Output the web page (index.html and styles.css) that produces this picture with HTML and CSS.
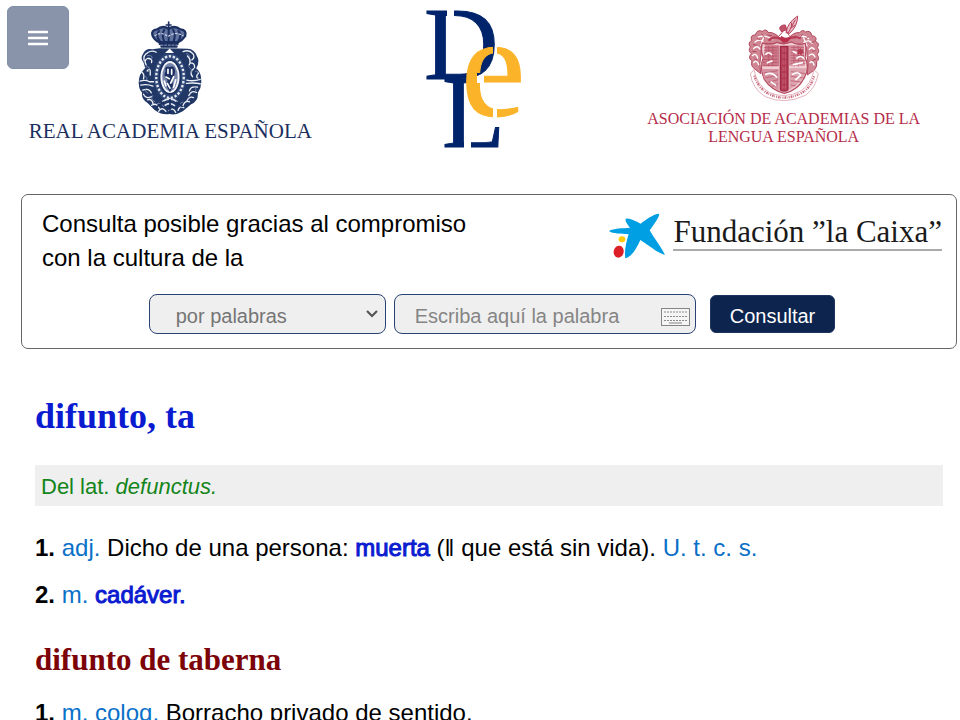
FILE: index.html
```
<!DOCTYPE html>
<html lang="es">
<head>
<meta charset="utf-8">
<meta name="viewport" content="width=device-width, initial-scale=1">
<title>difunto, difunta | Diccionario de la lengua española</title>
<link rel="stylesheet" href="styles.css">
</head>
<body>
<button class="menu-button" type="button" aria-label="Menú">
  <svg width="20" height="16" viewBox="0 0 20 16" aria-hidden="true"><path d="M1 2H19M1 8H19M1 14H19" stroke="#fff" stroke-width="2.600" stroke-linecap="round"/></svg>
</button>

<header class="site-header">
  <a class="brand brand-rae" href="#">
    <svg class="crest-rae" viewBox="54 35 190 280" aria-hidden="true">
      <!-- crown -->
      <g fill="none" stroke="#1b2f60" stroke-linecap="round">
        <path d="M145 38V60M138 47H152" stroke-width="5"/>
        <path d="M97 78Q92 62 111 60Q127 47 145 58Q163 47 180 60Q200 62 194 80Q184 94 173 98H117Q103 92 97 78Z" fill="#6373a0" stroke-width="7"/>
        <path d="M119 96Q105 78 116 65M132 97Q123 75 132 61M145 97V57M159 97Q168 76 158 61M173 96Q186 78 174 65" stroke-width="6"/>
        <path d="M104 79Q123 65 143 81Q165 65 188 79" stroke="#dce1ed" stroke-width="3" stroke-dasharray="5 6"/>
        <path d="M119 103H171M124 111H168" stroke-width="8"/>
        <path d="M122 107H170" stroke="#cbd2e3" stroke-width="2" stroke-dasharray="6 5"/>
      </g>
      <!-- mantling around the oval -->
      <path d="M118 116L96 119Q78 115 70 130Q59 146 70 158L75 175Q54 195 56 222Q57 241 66 248Q62 267 83 280L103 300Q122 315 147 312Q166 317 187 304L212 283Q234 273 232 249Q244 231 242 211Q242 187 227 176Q239 155 229 139Q221 119 202 118L173 117Z" fill="#213867"/>
      <g fill="none" stroke="#eef1f7" stroke-width="4" stroke-linecap="round">
        <path d="M72 153Q68 137 83 129Q95 121 108 128M78 166Q70 152 83 146Q98 148 94 159M81 184Q92 170 90 196M65 187Q74 194 70 207M60 214Q75 209 88 216H100M62 226Q81 222 98 229M68 241Q87 234 93 249M70 253Q78 269 94 260M82 270Q96 265 99 284M94 286Q111 277 117 296M115 304Q125 289 137 304"/>
        <path d="M188 126Q206 119 217 132Q225 143 214 151M201 139Q214 151 206 166M208 160Q224 159 222 174M219 177Q206 187 216 201M234 190Q224 202 232 205M199 211Q218 216 239 209M198 221Q219 218 239 222M231 232Q211 228 207 243M228 248Q213 240 205 257M219 263Q206 258 199 274M207 276Q194 270 187 288M190 293Q177 287 173 301M166 307Q157 291 146 302"/>
      </g>
      <g fill="none" stroke="#8290b3" stroke-width="2.500">
        <path d="M81 138Q100 135 94 150M76 173Q93 166 84 187M72 199Q84 202 79 211M79 235Q71 244 84 250M98 256Q88 267 105 276M110 282Q123 275 130 291M197 132Q207 132 207 145M204 171Q219 181 210 193M224 186Q235 180 230 195M221 228Q232 242 220 250M208 261Q196 267 207 271M188 276Q174 279 181 294"/>
      </g>
      <path d="M134 130L148 117L161 130Z" fill="#fff"/>
      <!-- oval medallion -->
      <ellipse cx="149" cy="202" rx="48" ry="70" fill="#324a79"/>
      <ellipse cx="149" cy="202" rx="41" ry="62" fill="none" stroke="#e3e8f1" stroke-width="7" stroke-dasharray="7 5"/>
      <ellipse cx="149" cy="202" rx="31" ry="50" fill="#f3f5fa" stroke="#1b2f60" stroke-width="5"/>
      <ellipse cx="149" cy="202" rx="23" ry="42" fill="#7785aa"/>
      <path d="M136 184Q131 168 147 172Q165 166 164 188Q163 202 154 210L158 226L149 248L137 225L142 211Q127 201 136 184Z" fill="#1b2f60"/>
      <path d="M143 179V191M154 180V193M137 202L147 207M160 201L151 220M141 221L149 235M132 214L137 228M166 210L160 232" fill="none" stroke="#fff" stroke-width="5" stroke-linecap="round"/>
      <path d="M126 275Q149 258 171 276M133 287Q149 275 164 288" fill="none" stroke="#dfe4ef" stroke-width="5"/>
      <path d="M149 267V310M108 292L132 276M187 291L167 276" stroke="#1b2f60" stroke-width="5"/>
    </svg>
    <span class="name-rae">REAL ACADEMIA ESPAÑOLA</span>
  </a>

  <a class="brand" href="#" aria-label="Diccionario de la lengua española">
    <svg class="monogram" viewBox="0 0 100 150" aria-hidden="true">
      <defs>
        <mask id="cut-d"><rect width="100" height="150" fill="#fff"/><rect x="23" y="6" width="7" height="13" fill="#000"/></mask>
        <mask id="cut-e"><rect width="100" height="150" fill="#fff"/><path d="M69 44h4v14h-4zM69 108h4v14h-4zM53 73h7v10h-7z" fill="#000"/></mask>
        <mask id="cut-l"><rect width="100" height="150" fill="#fff"/><rect x="40" y="138" width="7" height="12" fill="#000"/></mask>
      </defs>
      <g mask="url(#cut-d)"><text class="mono-blue" x="0" y="79">D</text></g>
      <g mask="url(#cut-l)"><text class="mono-blue" x="18" y="147">L</text></g>
      <g mask="url(#cut-e)"><text class="mono-gold" x="37" y="116">e</text></g>
    </svg>
  </a>

  <a class="brand brand-asale" href="#">
    <svg class="crest-asale" viewBox="36 14 222 264" aria-hidden="true">
      <!-- leaves -->
      <g fill="#cf8592" stroke="#b34a60" stroke-width="3">
        <path d="M147 98Q124 64 99 66Q95 54 82 63Q66 56 61 74Q44 73 50 91Q37 96 46 110Q38 120 49 130Q37 144 51 151Q46 167 58 175L77 190Q72 158 78 131Q76 105 101 100Z"/>
        <path d="M147 98Q175 62 194 67Q203 55 211 65Q228 58 230 76Q249 78 241 93Q256 99 247 112Q256 123 246 132Q256 146 245 154Q248 168 238 179L217 194Q222 157 216 132Q219 111 197 102Z"/>
      </g>
      <g fill="none" stroke="#fff" stroke-width="4" stroke-linecap="round">
        <path d="M70 80Q90 72 113 88M60 95Q75 83 85 96M56 115Q66 103 75 116M52 136Q64 126 68 143M56 157Q65 146 71 163M85 83L78 105M185 84Q205 71 221 85M207 96Q223 86 231 99M223 117Q233 106 239 120M223 135Q234 126 240 140M225 157Q233 149 237 164M206 83L216 107"/>
      </g>
      <g fill="none" stroke="#a83d53" stroke-width="2.500">
        <path d="M80 70L89 82M67 84L77 89M54 103L66 105M52 123L64 124M58 145L67 150M203 71L194 83M219 79L211 87M239 92L229 98M243 119L231 123M244 145L232 151M97 74L111 76M182 76L173 83"/>
      </g>
      <!-- branch and figure above the shield -->
      <path d="M101 91Q117 72 147 91Q167 76 198 83" fill="none" stroke="#b9405a" stroke-width="7"/>
      <path d="M133 86L139 77Q154 87 172 80L158 95Q144 100 133 86Z" fill="#b9304d"/>
      <path d="M153 67Q157 37 188 17Q188 47 164 69Z" fill="#e9bdc6" stroke="#b9405a" stroke-width="3"/>
      <path d="M134 55Q135 43 151 44L155 57L140 65ZM142 66L131 78M152 59L163 76M160 67L181 28M169 49L170 37M166 54L181 44" fill="#bf5268" stroke="#b9405a" stroke-width="3"/>
      <!-- shield -->
      <path d="M82 98Q108 106 125 96Q147 105 169 95Q189 107 211 99Q215 122 210 142Q226 170 208 202Q190 239 148 249Q109 239 88 207Q72 172 85 142Q75 122 82 98Z" fill="#f0ced4" stroke="#b44c62" stroke-width="4"/>
      <path d="M90 105H132V168H79Q80 153 88 141Z" fill="#cb7888"/>
      <path d="M162 105H206L209 166H162Z" fill="#d48c9a"/>
      <path d="M83 176H131V240Q101 226 86 201Z" fill="#d491a0"/>
      <path d="M163 174H214Q208 213 163 239Z" fill="#dca2ad"/>
      <g fill="none" stroke="#b54b62" stroke-width="2">
        <path d="M87 112H127M87 120H127M87 128H127M86 137H127M84 147H127M82 156H127M84 166H127M101 107V167M113 107V167M167 111H207M167 119H207M167 127H207M167 135H207M167 143H207M167 151H211M167 159H211M177 107V169M190 107V169"/>
        <path d="M87 188L128 181M91 203L129 194M98 216L130 208M112 228L130 220M168 184L212 190M167 198L207 203M167 211L198 215M167 224L183 227"/>
      </g>
      <g fill="none" stroke="#fff" stroke-width="5">
        <path d="M91 133Q102 121 111 134M95 158L113 151M173 123L185 129M184 145Q198 132 207 145M173 163L204 157M91 193Q109 182 126 201M107 214L123 225M171 193Q190 180 198 196M181 209L197 195"/>
      </g>
      <path d="M196 112l3 6 7-2-3 7 5 5-7 1-2 7-5-6-7 2 3-7-5-5 7-1z" fill="#b23b53"/>
      <path d="M136 108H159V238Q149 246 136 239Z" fill="#b23b53" stroke="#9f2844" stroke-width="4"/>
      <path d="M144 112V235M151 112V235" stroke="#ce7688" stroke-width="2" stroke-dasharray="13 6"/>
      <!-- motto ribbon -->
      <path d="M57 178Q65 225 104 247Q149 266 196 243Q229 222 237 178L250 190Q241 235 211 255Q148 285 91 259Q52 235 46 190Z" fill="#fff" stroke="#d58c9b" stroke-width="2"/>
      <path d="M58 196Q69 232 98 249Q148 276 203 246Q229 229 237 198" fill="none" stroke="#cb6a7d" stroke-width="7" stroke-dasharray="3 3 5 2 2 4"/>
    </svg>
    <span class="name-asale">ASOCIACIÓN DE ACADEMIAS DE LA<br>LENGUA ESPAÑOLA</span>
  </a>
</header>

<main>
  <section class="search-panel">
    <div class="sponsor">
      <p class="sponsor-text">Consulta posible gracias al compromiso<br>con la cultura de la</p>
      <a class="sponsor-logo" href="#">
        <svg width="56" height="46" viewBox="26 68 168 138" aria-hidden="true">
          <path d="M26 122C40 113 67 114 89 112C81 102 72 90 77 85C89 83 105 92 121 100C137 87 160 71 176 70C179 78 162 100 148 120C160 142 184 172 194 194C174 190 139 160 120 149C111 169 96 199 75 204C71 185 78 153 85 132C64 129 36 131 26 122Z" fill="#009fe3"/>
          <ellipse cx="65" cy="147" rx="10" ry="9" fill="#ffcb05"/>
          <ellipse cx="55" cy="184" rx="15" ry="18" fill="#dc1f26" transform="rotate(12 55 184)"/>
        </svg>
        <span class="sponsor-name">Fundación ”la Caixa”</span>
      </a>
    </div>
    <form class="search-form">
      <span class="field field-mode">
        <select class="control mode" aria-label="Modo de búsqueda"><option>por palabras</option></select>
        <svg class="chevron" width="12" height="8" viewBox="0 0 12 8" aria-hidden="true"><path d="M1 1L6 6L11 1" fill="none" stroke="#555" stroke-width="2.200"/></svg>
      </span>
      <span class="field field-word">
        <input class="control word" type="text" aria-label="Palabra" placeholder="Escriba aquí la palabra">
        <button class="keyboard" type="button" aria-label="Teclado">
          <svg width="29" height="18" viewBox="0 0 29 18" aria-hidden="true"><rect x=".5" y=".5" width="28" height="17" fill="#f5f5f5" stroke="#858585"/><path d="M3 4H26M3 8.500H26M3 12.500H26" stroke="#8b8b8b" stroke-dasharray="2 1"/><path d="M8 15H21" stroke="#858585"/></svg>
        </button>
      </span>
      <button class="submit" type="submit">Consultar</button>
    </form>
  </section>

  <article class="entry">
    <h1>difunto, ta</h1>
    <p class="etymology">Del lat. <em>defunctus.</em></p>
    <p class="sense"><b>1.</b> <abbr>adj.</abbr> Dicho de una persona: <a href="#">muerta</a> (‖ que está sin vida). <abbr>U. t. c. s.</abbr></p>
    <p class="sense"><b>2.</b> <abbr>m.</abbr> <a href="#">cadáver.</a></p>
    <h2>difunto de taberna</h2>
    <p class="sense"><b>1.</b> <abbr>m. coloq.</abbr> Borracho privado de sentido.</p>
  </article>
</main>
</body>
</html>
```
FILE: styles.css
```
* { box-sizing: border-box; }

body {
  margin: 0;
  background: #fff;
  color: #000;
  font-family: "Liberation Sans", Arial, sans-serif;
  font-size: 24px;
  line-height: 34px;
}

a { text-decoration: none; }
button, input, select { font: inherit; }

.menu-button {
  position: absolute;
  top: 6px;
  left: 7px;
  display: flex;
  align-items: center;
  justify-content: center;
  width: 62px;
  height: 63px;
  padding: 0;
  border: 1px solid #8090a8;
  border-radius: 6px;
  background: #8994ab;
}

.site-header {
  display: grid;
  grid-template-columns: 300fr 306fr 312fr;
  align-items: start;
  padding: 0 20px;
}

.brand {
  display: flex;
  flex-direction: column;
  align-items: center;
  text-align: center;
  font-family: "Liberation Serif", "Times New Roman", serif;
}

.brand-rae { padding-top: 21px; color: #1b2f60; }
.crest-rae { width: 64px; height: 94px; }
.name-rae { margin-top: 4px; font-size: 21px; line-height: 24px; white-space: nowrap; }

.monogram { width: 100px; height: 150px; }
.mono-blue { font-size: 103px; fill: #00246b; stroke: #00246b; stroke-width: 1px; }
.mono-gold { font-size: 145px; fill: #fbb42a; stroke: #fbb42a; stroke-width: 1px; }

.brand-asale { padding-top: 15px; color: #b52c49; }
.crest-asale { width: 74px; height: 88px; }
.name-asale { margin-top: 7px; font-size: 16px; line-height: 18px; white-space: nowrap; }

.search-panel {
  margin: 44px 3px 0 21px;
  padding: 12px 14px 14px 20px;
  border: 1px solid #666;
  border-radius: 7px;
}

.sponsor {
  display: flex;
  justify-content: space-between;
  align-items: flex-start;
}

.sponsor-text { margin: 0; }

.sponsor-logo {
  display: flex;
  gap: 8px;
  padding-top: 6px;
  color: #1a1a1a;
}

.sponsor-name {
  align-self: flex-start;
  margin-top: 2px;
  border-bottom: 2px solid #aaa;
  font-family: "Liberation Serif", "Times New Roman", serif;
  font-size: 31px;
  line-height: 34px;
  white-space: nowrap;
}

.search-form {
  display: flex;
  justify-content: center;
  align-items: center;
  gap: 8px;
  margin-top: 19px;
  font-size: 20px;
  line-height: 24px;
}

.field { position: relative; display: flex; }
.field-mode { flex: 0 1 237px; }
.field-word { flex: 0 1 302px; }

.control {
  width: 100%;
  height: 40px;
  margin: 0;
  padding: 4px 20px 0;
  border: 1px solid #2b4373;
  border-radius: 8px;
  background: #efefef;
  color: #757575;
  appearance: none;
}

.mode { padding-left: 26px; }
.word::placeholder { color: #858585; opacity: 1; }

.chevron { position: absolute; top: 16px; right: 8px; pointer-events: none; }

.keyboard {
  position: absolute;
  top: 14px;
  right: 6px;
  display: flex;
  padding: 0;
  border: 0;
  background: none;
}

.submit {
  height: 38px;
  margin-left: 6px;
  padding: 4px 19px 0;
  border: 1px solid #1d355f;
  border-radius: 6px;
  background: #0c244e;
  color: #fff;
}

.entry { padding: 0 17px 0 35px; }

h1, h2 {
  font-family: "Liberation Serif", "Times New Roman", serif;
  font-weight: bold;
}

h1 { margin: 45px 0 27px; color: #0a1bd0; font-size: 36px; line-height: 44px; }
h2 { margin: 29px 0 17px; color: #7c0308; font-size: 31px; line-height: 38px; }

.etymology {
  margin: 0 0 25px;
  padding: 5px 6px 2px;
  background: #efefef;
  color: #14851a;
  font-size: 22px;
}

.sense { margin: 0 0 13px; }
.sense abbr { color: #0a70c8; }
.sense a { color: #0a1bd0; -webkit-text-stroke: 1px #0a1bd0; }
```
